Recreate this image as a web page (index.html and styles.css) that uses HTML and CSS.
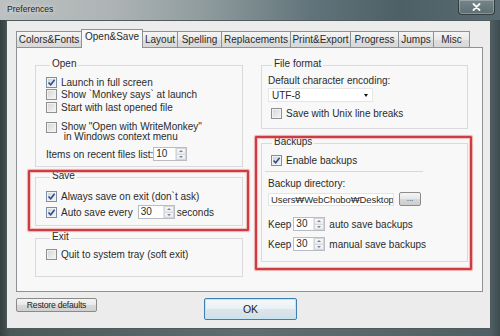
FILE: index.html
```html
<!DOCTYPE html>
<html>
<head>
<meta charset="utf-8">
<title>Preferences</title>
<link rel="stylesheet" href="styles.css">
</head>
<body>
<div class="window">
  <div class="titlebar">
    <span class="title">Preferences</span>
    <span class="close"><svg width="9" height="8" viewBox="0 0 9 8"><path d="M1.5 1 L7.5 7 M7.5 1 L1.5 7" stroke="#f4f6f6" stroke-width="1.8" stroke-linecap="round"/></svg></span>
  </div>
  <div class="frame">
    <div class="client">
      <div class="tabs">
        <div class="tab t-colors">Colors&amp;Fonts</div>
        <div class="tab t-open active">Open&amp;Save</div>
        <div class="tab t-layout">Layout</div>
        <div class="tab t-spelling">Spelling</div>
        <div class="tab t-repl">Replacements</div>
        <div class="tab t-print">Print&amp;Export</div>
        <div class="tab t-progress">Progress</div>
        <div class="tab t-jumps">Jumps</div>
        <div class="tab t-misc">Misc</div>
      </div>
      <div class="panel">
        <div class="col">
          <div class="group g-open">
            <div class="gtitle">Open</div>
            <label class="row r-first"><span class="cb on"><svg width="9" height="9" viewBox="0 0 9 9"><path d="M1.5 4.5 L3.7 6.8 L7.6 1.8" fill="none" stroke="#2d4c7c" stroke-width="1.5"/></svg></span>Launch in full screen</label>
            <label class="row"><span class="cb"></span>Show `Monkey says` at launch</label>
            <label class="row"><span class="cb"></span>Start with last opened file</label>
            <label class="row two"><span class="cb"></span><span class="twoline">Show "Open with WriteMonkey"<br>&nbsp;in Windows context menu</span></label>
            <div class="row r-items">Items on recent files list:<span class="spin spin-items"><span class="spin-val">10</span><span class="spin-btns"><span class="up"></span><span class="dn"></span></span></span></div>
          </div>
          <div class="group g-save">
            <div class="gtitle">Save</div>
            <label class="row r-save1"><span class="cb on"><svg width="9" height="9" viewBox="0 0 9 9"><path d="M1.5 4.5 L3.7 6.8 L7.6 1.8" fill="none" stroke="#2d4c7c" stroke-width="1.5"/></svg></span>Always save on exit (don`t ask)</label>
            <div class="row r-save2"><span class="cb on"><svg width="9" height="9" viewBox="0 0 9 9"><path d="M1.5 4.5 L3.7 6.8 L7.6 1.8" fill="none" stroke="#2d4c7c" stroke-width="1.5"/></svg></span>Auto save every<span class="spin spin-auto"><span class="spin-val">30</span><span class="spin-btns"><span class="up"></span><span class="dn"></span></span></span><span class="after">seconds</span></div>
          </div>
          <div class="group g-exit">
            <div class="gtitle">Exit</div>
            <label class="row r-exit"><span class="cb"></span>Quit to system tray (soft exit)</label>
          </div>
        </div>
        <div class="col">
          <div class="group g-format">
            <div class="gtitle">File format</div>
            <div class="line l-enc">Default character encoding:</div>
            <div class="combo"><span>UTF-8</span><span class="arrow"></span></div>
            <label class="row r-unix"><span class="cb"></span>Save with Unix line breaks</label>
          </div>
          <div class="group g-backups">
            <div class="gtitle">Backups</div>
            <label class="row r-enable"><span class="cb on"><svg width="9" height="9" viewBox="0 0 9 9"><path d="M1.5 4.5 L3.7 6.8 L7.6 1.8" fill="none" stroke="#2d4c7c" stroke-width="1.5"/></svg></span>Enable backups</label>
            <div class="sep"></div>
            <div class="line l-dir">Backup directory:</div>
            <div class="dir-row"><span class="textbox">Users₩WebChobo₩Desktop</span><span class="dots">...</span></div>
            <div class="keep k1">Keep<span class="spin spin-keep"><span class="spin-val">30</span><span class="spin-btns"><span class="up"></span><span class="dn"></span></span></span><span class="after2">auto save backups</span></div>
            <div class="keep k2">Keep<span class="spin spin-keep"><span class="spin-val">30</span><span class="spin-btns"><span class="up"></span><span class="dn"></span></span></span><span class="after2">manual save backups</span></div>
          </div>
        </div>
        <div class="mark mark-save"></div>
        <div class="mark mark-backups"></div>
      </div>
      <div class="footer">
        <button class="btn restore">Restore defaults</button>
        <button class="btn ok">OK</button>
      </div>
    </div>
  </div>
</div>
</body>
</html>
```
FILE: styles.css
```css
* { box-sizing: border-box; }
html, body { margin: 0; padding: 0; }
body {
  width: 500px;
  height: 336px;
  overflow: hidden;
  font-family: "Liberation Sans", Arial, "DejaVu Sans", sans-serif;
  font-size: 10px;
  color: #2b2b2b;
  background: #3a4646;
}
.window {
  width: 500px;
  height: 336px;
  display: flex;
  flex-direction: column;
  background: linear-gradient(to right, #3b4747 0%, #56676a 50%, #4b5c61 100%);
}
.titlebar {
  height: 20px;
  display: flex;
  justify-content: space-between;
  align-items: flex-start;
  background: linear-gradient(to right, #bcc0c0 0%, #aeb4b5 22%, #8d9a9c 42%, #62747b 62%, #4d6065 80%, #596b70 100%);
}
.title {
  margin: 4px 0 0 7px;
  font-size: 8.6px;
  color: #1c1c1c;
  text-shadow: 0 0 5px rgba(255,255,255,0.9);
}
.close {
  width: 37px;
  height: 15px;
  margin-right: 5px;
  border: 1px solid rgba(30,40,42,0.75);
  border-top: none;
  border-radius: 0 0 4px 4px;
  background: linear-gradient(#75868a, #5d6f74);
  box-shadow: inset 0 0 0 1px rgba(255,255,255,0.25);
  display: flex;
  align-items: center;
  justify-content: center;
}
.frame {
  flex: 1;
  padding: 0 9px 7px 6px;
  display: flex;
  background: linear-gradient(to right, #354141 0%, #4b5858 2%, #5f6e70 50%, #4f6064 98%, #3d4b4f 100%);
}
.client {
  flex: 1;
  border: 1px solid #4f5a5c;
  background: #ececec;
  padding: 10px 7px 0 9px;
  display: flex;
  flex-direction: column;
}
.tabs {
  height: 16px;
  display: flex;
  align-items: flex-end;
  position: relative;
  z-index: 1;
}
.tab {
  height: 16px;
  border: 1px solid #8e9196;
  border-bottom: none;
  margin-left: -1px;
  background: linear-gradient(#f4f4f4, #e9e9e9 50%, #dedede 51%, #d8d8d8);
  text-align: center;
  line-height: 15px;
  white-space: nowrap;
}
.tab:first-child { margin-left: 0; }
.tab.active {
  height: 19px;
  margin-bottom: -1px;
  background: #f8f8f8;
  line-height: 14px;
  position: relative;
  z-index: 2;
}
.t-colors { width: 66px; }
.t-open { width: 62px; }
.t-layout { width: 36px; }
.t-spelling { width: 45px; }
.t-repl { width: 70px; }
.t-print { width: 61px; }
.t-progress { width: 49px; }
.t-jumps { width: 36px; }
.t-misc { width: 37px; }

.panel {
  height: 245px;
  border: 1px solid #8e9196;
  background: #f8f8f8;
  display: grid;
  grid-template-columns: 208px 207px;
  column-gap: 18px;
  align-items: start;
  padding: 17px 0 0 18px;
  position: relative;
}
.col { display: flex; flex-direction: column; }
.group {
  border: 1px solid #dadada;
}
.gtitle {
  margin: -8px 0 0 4px;
  height: 12px;
  line-height: 12px;
  padding: 0 2px;
  width: fit-content;
  background: #f8f8f8;
}
.g-open { padding: 0 0 5px 10px; }
.g-save { margin-top: 10px; padding: 0 0 6px 10px; }
.g-exit { margin-top: 12px; padding: 0 0 16px 10px; }
.g-format { padding: 0 0 9px 6px; }
.g-backups { margin-top: 14px; padding: 0 0 10px 6px; }

.row {
  display: flex;
  align-items: center;
  height: 12.5px;
  white-space: nowrap;
}
.r-first { margin-top: 6px; }
.row.two {
  height: auto;
  align-items: flex-start;
  margin-top: 8.5px;
}
.twoline { line-height: 9.5px; }
.r-items { margin-top: 6px; height: 14px; }
.r-save1 { margin-top: 8px; height: 12px; }
.r-save2 { margin-top: 3px; height: 14px; }
.r-exit { margin-top: 5px; height: 12px; }
.r-unix { margin-top: 5px; height: 12px; padding-left: 3px; }
.r-enable { margin-top: 6px; height: 12px; padding-left: 3px; }

.cb {
  width: 11px;
  height: 11px;
  flex: none;
  margin-right: 4px;
  border: 1px solid #8f9092;
  background: linear-gradient(135deg, #d4d4d4, #f6f6f6);
  box-shadow: inset 0 0 0 1px #f2f2f2;
  display: flex;
  align-items: center;
  justify-content: center;
}
.cb.on {
  background: linear-gradient(135deg, #c9d3e0, #f2f5f9);
  border-color: #7e8ea4;
}
.cb svg { display: block; }

.spin {
  display: inline-flex;
  height: 14px;
  border: 1px solid #b9bcc1;
  background: #fff;
  flex: none;
}
.spin-items { width: 34px; }
.spin-auto { width: 37px; margin-left: 5px; }
.spin-keep { width: 32px; margin-left: 2px; }
.spin-val { flex: 1; padding-left: 2px; line-height: 12px; }
.spin-btns {
  width: 11px;
  display: flex;
  flex-direction: column;
  border-left: 1px solid #e2e4e7;
}
.spin-btns .up, .spin-btns .dn {
  flex: 1;
  display: flex;
  align-items: center;
  justify-content: center;
  background: linear-gradient(#f7f8f9, #e8eaed);
  border: 1px solid #d3d6db;
}
.spin-btns .dn { border-top: none; }
.spin-btns .up::after {
  content: "";
  border-left: 2.5px solid transparent;
  border-right: 2.5px solid transparent;
  border-bottom: 2.5px solid #7a8593;
}
.spin-btns .dn::after {
  content: "";
  border-left: 2.5px solid transparent;
  border-right: 2.5px solid transparent;
  border-top: 2.5px solid #7a8593;
}
.after { margin-left: 2px; }
.after2 { margin-left: 4px; }

.line { height: 12px; line-height: 12px; white-space: nowrap; }
.l-enc { margin-top: 5px; }
.combo {
  margin-top: 1px;
  width: 105px;
  height: 14px;
  background: #fff;
  border: 1px solid #e6e6e6;
  display: flex;
  align-items: center;
  justify-content: space-between;
  padding: 0 4px 0 3px;
}
.combo .arrow {
  border-left: 2.5px solid transparent;
  border-right: 2.5px solid transparent;
  border-top: 3px solid #111;
}
.sep {
  margin: 5px 0 0 -3px;
  width: 158px;
  height: 1px;
  background: #d8d8d8;
}
.l-dir { margin-top: 6px; }
.dir-row {
  margin-top: 2px;
  height: 14px;
  display: flex;
  align-items: center;
}
.textbox {
  width: 126px;
  height: 13px;
  background: #fff;
  border: 1px solid #e4e4e4;
  font-size: 9.5px;
  line-height: 11px;
  padding-left: 2px;
  overflow: hidden;
  white-space: nowrap;
  letter-spacing: -0.1px;
}
.dots {
  margin-left: 5px;
  width: 22px;
  height: 14px;
  border: 1px solid #8c8c8c;
  border-radius: 2px;
  background: linear-gradient(#f5f5f5, #e6e6e6 50%, #d7d7d7 51%, #cdcdcd);
  font-size: 8px;
  text-align: center;
  line-height: 11px;
}
.keep {
  height: 14px;
  display: flex;
  align-items: center;
  white-space: nowrap;
}
.k1 { margin-top: 11px; }
.k2 { margin-top: 6px; }

.mark {
  position: absolute;
  border: 2px solid #cc3c42;
  box-shadow: 0 0 1px 1px rgba(225, 110, 110, 0.55), inset 0 0 1px 1px rgba(225, 110, 110, 0.45);
  border-radius: 1px;
}
.mark-save { left: 11px; top: 122px; width: 221px; height: 61px; }
.mark-backups { left: 238px; top: 88px; width: 217px; height: 134px; }

.footer {
  margin-top: 6px;
  display: flex;
  align-items: flex-start;
}
.btn {
  font-family: "Liberation Sans", Arial, sans-serif;
  color: #222;
  padding: 0;
  margin: 0;
  border-radius: 2px;
}
.restore {
  width: 81px;
  height: 14px;
  font-size: 8.6px;
  line-height: 12px;
  border: 1px solid #8a8a8a;
  background: linear-gradient(#f4f4f4, #e8e8e8 50%, #d9d9d9 51%, #d0d0d0);
  letter-spacing: -0.2px;
}
.ok {
  margin-left: 107px;
  width: 93px;
  height: 22px;
  font-size: 10.5px;
  border: 1px solid #3c7fb1;
  box-shadow: inset 0 0 0 1px #c4e5f6;
  background: linear-gradient(#f4f8fa, #e9f1f5 50%, #dbe6ec 51%, #d2dfe6);
}
```
